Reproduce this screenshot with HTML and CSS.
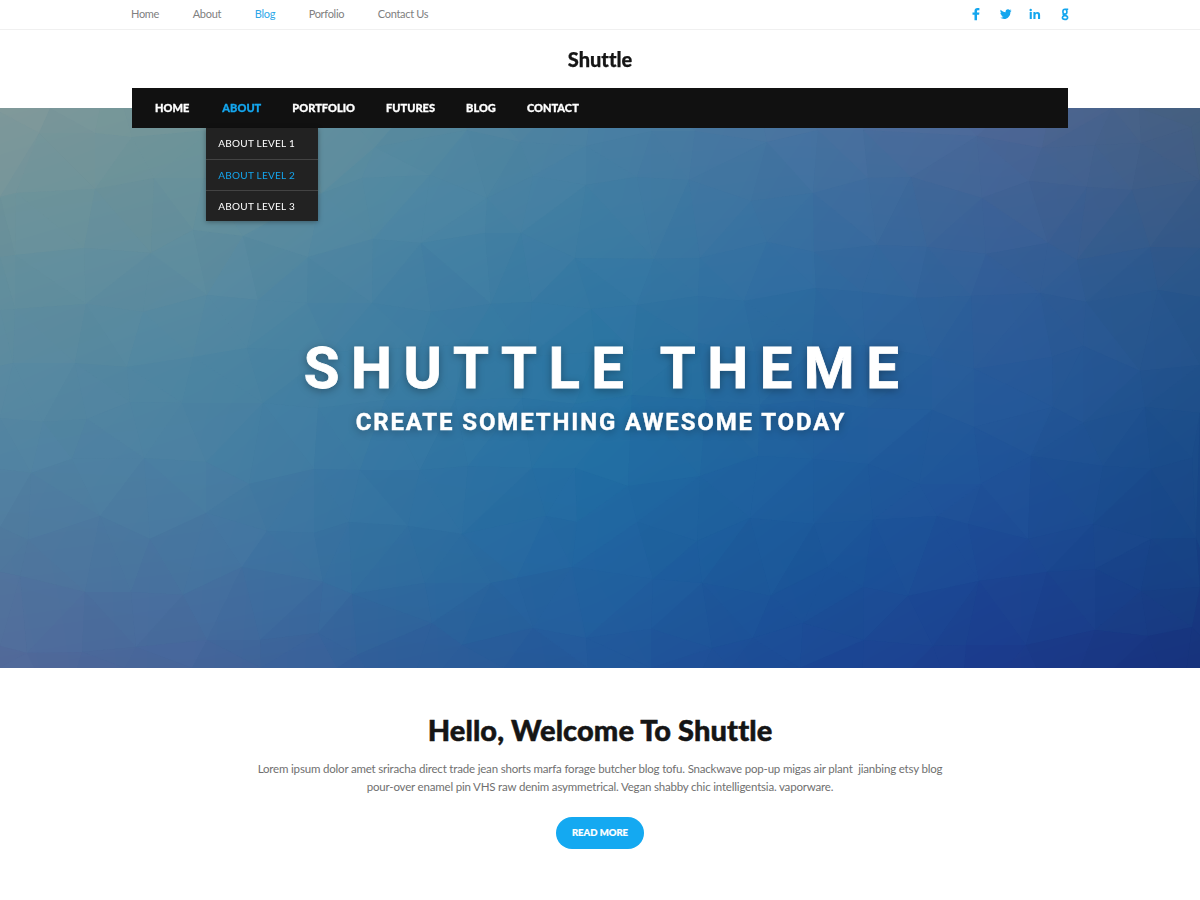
FILE: index.html
```html
<!DOCTYPE html>
<html lang="en">
<head>
<meta charset="utf-8">
<title>Shuttle</title>
<link rel="stylesheet" href="styles.css">
</head>
<body>
<div class="topbar">
  <div class="container topbar-inner">
    <nav class="top-links">
      <a href="#">Home</a><a href="#">About</a><a href="#" class="active">Blog</a><a href="#">Porfolio</a><a href="#">Contact Us</a>
    </nav>
    <div class="social">
      <svg class="icon" viewBox="0 0 14 14"><path d="M5.500 13.300V7.800H3.500V5.600h2V4C5.500 2 6.600 1 8.400 1h2v2.300H8.900c-.7 0-.9.3-.9.9v1.400h2.400l-.3 2.200H8v5.500z"/></svg>
      <svg class="icon" viewBox="0 0 14 14"><path d="M12.700 3.800l-1.300 1.100c.1 4.300-3 7-6.200 7-1.500 0-2.900-.4-4-1.100 1.300.1 2.500-.3 3.400-1-1.100 0-1.900-.7-2.200-1.600h1C2.200 7.900 1.400 7 1.400 5.700l1 .3C1.300 5.200 1.100 3.900 1.700 2.800c1.300 1.500 3 2.400 4.900 2.500-.3-1.700.9-3 2.400-3 .7 0 1.300.3 1.700.7l1.500-.5-.9 1.400z"/></svg>
      <svg class="icon" viewBox="0 0 14 14"><path d="M1.700 5.100h2.100V12H1.700zM2.700 1.800a1.200 1.200 0 110 2.400 1.200 1.200 0 010-2.400zM5.400 5.100h2v.9c.4-.7 1.100-1.100 2-1.100 1.900 0 2.700 1.200 2.700 3.100v4H10V8.400c0-1-.3-1.600-1.100-1.600-.9 0-1.400.6-1.400 1.700V12H5.400z"/></svg>
      <svg class="icon line" viewBox="0 0 14 14"><path d="M10.200 2.200H7.400M8.900 4.700a2 2.400 0 11-4 0 2 2.400 0 014 0zM5.600 6.900c-.7.6-.5 1.400.6 1.500 2.100.2 3.400.5 3.400 2 0 1.300-1.200 2-2.700 2s-2.500-.6-2.500-1.800c0-.9.600-1.500 1.800-1.900"/></svg>
    </div>
  </div>
</div>
<header class="container header">
  <div class="logo">Shuttle</div>
  <nav class="mainnav">
    <div class="item"><a href="#">HOME</a></div>
    <div class="item open"><a href="#" class="active">ABOUT</a>
      <div class="dropdown">
        <a href="#">ABOUT LEVEL 1</a><a href="#" class="active">ABOUT LEVEL 2</a><a href="#">ABOUT LEVEL 3</a>
      </div>
    </div>
    <div class="item"><a href="#">PORTFOLIO</a></div>
    <div class="item"><a href="#">FUTURES</a></div>
    <div class="item"><a href="#">BLOG</a></div>
    <div class="item"><a href="#">CONTACT</a></div>
  </nav>
</header>
<section class="hero">
  <canvas class="mesh" id="mesh" width="1200" height="560"></canvas>
  <div class="hero-text">
    <h1>SHUTTLE THEME</h1>
    <p>CREATE SOMETHING AWESOME TODAY</p>
  </div>
</section>
<section class="welcome">
  <h2>Hello, Welcome To Shuttle</h2>
  <p>Lorem ipsum dolor amet sriracha direct trade jean shorts marfa forage butcher blog tofu. Snackwave pop-up migas air plant &nbsp;jianbing etsy blog<br>pour-over enamel pin VHS raw denim asymmetrical. Vegan shabby chic intelligentsia. vaporware.</p>
  <a href="#" class="button">READ MORE</a>
</section>
<script src="mesh.js"></script>
</body>
</html>
```
FILE: styles.css
```css
* { box-sizing: border-box; }
body { margin: 0; background: #fff; color: #151515; font-family: Lato, "Open Sans", sans-serif; font-variant-ligatures: none; height: 900px; overflow: hidden; }
a { color: inherit; text-decoration: none; }
.container { width: 936px; margin: 0 auto; }
.topbar { height: 30px; border-bottom: 1px solid #f0f0f0; }
.topbar-inner { display: flex; justify-content: space-between; }
.top-links { display: flex; gap: 33.6px; margin-left: -1px; font-size: 11px; line-height: 28px; letter-spacing: -.3px; color: #808080; }
.top-links .active { color: #2ea7e8; }
.social { display: flex; gap: 15.6px; padding-top: 7px; margin-right: -3.700px; }
.icon { width: 14px; height: 14px; fill: #14a6ee; }
.icon.line { fill: none; stroke: #14a6ee; stroke-width: 1.6; }
.header { position: relative; z-index: 2; height: 78px; }
.logo { height: 58px; line-height: 59px; text-align: center; font-size: 20px; font-weight: 900; -webkit-text-stroke: .25px; }
.mainnav { display: flex; gap: 31px; height: 40px; padding-left: 23px; background: #111; color: #fff; font-size: 11px; font-weight: 900; line-height: 40px; letter-spacing: .03px; -webkit-text-stroke: .3px; }
.item { position: relative; }
.item.open { margin-left: 2px; }
.mainnav .active { color: #14a6ee; }
.dropdown { position: absolute; top: 40px; left: -16px; width: 112px; background: #222; box-shadow: 0 1px 5px rgba(0,0,0,.35); -webkit-text-stroke: 0; }
.dropdown a { display: block; height: 31px; line-height: 31px; padding-left: 12px; font-size: 10px; font-weight: 400; letter-spacing: .25px; white-space: nowrap; }
.dropdown a + a { border-top: 1px solid #434343; line-height: 30px; }
.dropdown a:first-child { height: 31px; }
.hero { display: grid; height: 560px; background: #2b72a2; }
.mesh, .hero-text { grid-area: 1 / 1; }
.mesh { display: block; }
.hero-text { z-index: 1; padding-top: 226px; text-align: center; color: #fff; font-family: Roboto, sans-serif; font-weight: 700; text-shadow: 0 2px 8px rgba(0,0,0,.35); }
.hero-text h1 { margin: 0; padding-left: 14px; font-size: 58px; line-height: 68px; font-weight: 700; letter-spacing: 11.500px; -webkit-text-stroke: .8px; }
.hero-text p { margin: 6px 0 0; padding-left: 2px; font-size: 24px; line-height: 28px; letter-spacing: 1.860px; -webkit-text-stroke: .4px; }
.welcome { text-align: center; padding-top: 44px; }
.welcome h2 { margin: 0; font-size: 29px; line-height: 36px; font-weight: 900; letter-spacing: .1px; -webkit-text-stroke: .5px; }
.welcome p { margin: 12px 0 22px; font-size: 11.500px; line-height: 17.500px; letter-spacing: -.185px; color: #707070; }
.button { display: inline-block; width: 88px; height: 32px; line-height: 32px; border-radius: 16px; background: #14a9f1; color: #fff; font-size: 9.500px; font-weight: 900; -webkit-text-stroke: .2px; }
```
FILE: mesh.js
```js
const xs = [0, 200, 400, 600, 800, 1000, 1200];
const ys = [108, 200, 290, 380, 460, 560, 668];
const grid = [
  '80989a 70959a 5b8b9e 4a7fa2 4c74a0 4e6797 466080',
  '6f939a 66909b 5088a2 427ea2 3c70a0 406295 3a5a85',
  '628e9d 598aa0 437fa2 3377a2 2f6ba0 315e98 28558a',
  '5989a0 4c84a1 3a7ca2 2874a2 25659c 285a9a 20508a',
  '5283a2 4a80a2 3475a2 216ea3 205f9e 205498 194b88',
  '50779d 4674a0 2f6e9f 2063a0 1b5799 1c4894 174384',
  '52699a 45649a 2f5d99 22579a 1c4995 1c3b8c 17327c'
].map(r => r.split(' ').map(h => [0, 2, 4].map(i => parseInt(h.substr(i, 2), 16))));

function locate(a, v) {
  v = Math.max(a[0], Math.min(a[a.length - 1], v));
  let i = 0;
  while (i < a.length - 2 && v > a[i + 1]) i++;
  return [i, (v - a[i]) / (a[i + 1] - a[i])];
}
function colorAt(x, y) {
  const [i, u] = locate(xs, x), [j, v] = locate(ys, y);
  return [0, 1, 2].map(k =>
    (grid[j][i][k] * (1 - u) + grid[j][i + 1][k] * u) * (1 - v) +
    (grid[j + 1][i][k] * (1 - u) + grid[j + 1][i + 1][k] * u) * v);
}

const flat = [
50,108,39,133,16,193,95,133,95,189,154,178,15,255,84,248,151,253,193,230,243,236,207,295,258,300,307,303,308,257,322,193,362,178,373,239,372,303,375,147,86,304,143,312,15,309,193,357,247,348,127,367,75,363,13,363,0,197,0,257,0,310,0,366,204,178,132,137,210,130,
467,130,520,142,430,175,487,198,533,176,586,185,586,146,521,233,421,243,485,233,575,258,654,259,637,177,689,180,695,131,652,131,767,142,751,201,700,258,767,242,698,296,744,301,637,305,591,309,532,302,491,304,431,312,467,345,595,352,633,351,698,343,527,357,420,347,
813,193,868,178,911,177,982,198,977,136,1042,148,1029,181,1095,145,1087,187,1141,143,1132,190,1191,127,1200,180,877,245,927,247,986,254,1048,243,1077,260,1150,247,1158,290,1200,297,1086,302,1040,293,971,296,916,298,862,292,816,288,814,252,1083,346,1140,371,974,369,932,357,865,345,1052,357,863,130,818,130,1200,248,1200,365,1112,108,1139,108,
43,422,87,419,130,402,182,403,31,473,72,459,144,458,206,462,263,403,318,408,314,469,360,470,249,484,206,513,150,539,100,516,28,540,20,576,85,592,131,592,183,595,242,567,267,531,314,533,349,522,323,582,352,594,27,653,82,652,136,647,207,640,260,640,318,633,357,655,0,418,0,469,0,527,0,572,0,646,192,668,125,668,261,668,337,668,
420,470,468,466,532,468,575,468,628,486,700,476,758,456,750,518,577,522,637,522,546,516,462,534,408,526,425,583,491,583,517,578,572,567,653,579,702,583,697,541,771,596,753,638,712,648,651,629,586,638,533,628,462,645,432,623,504,668,588,668,651,668,730,668,800,668,
632,395,706,400,455,400,522,398,760,405,330,352,385,400,755,352,812,350,815,400,575,404,
868,408,932,410,974,427,1053,407,1083,423,1145,407,1200,413,1031,456,1151,469,1103,466,1192,458,813,459,868,464,919,484,981,484,937,516,873,520,814,524,968,524,1028,539,1093,524,1151,539,1196,538,1047,572,1095,569,979,581,908,596,863,587,828,567,803,623,864,640,933,646,966,645,1026,645,1095,630,1148,636,1192,627,1141,591,1200,587,
-60,80,-60,700,1260,80,1260,700,110,60,300,60,450,60,600,60,750,60,900,60,1060,60,60,720,200,720,400,720,560,720,680,720,860,720,960,720,1060,720,1180,720];
const pts = [];
for (let i = 0; i < flat.length; i += 2) pts.push([flat[i], flat[i + 1]]);

// Bowyer-Watson triangulation
function triangulate(points) {
  const n = points.length;
  const p = points.concat([[-5000, -4000], [6500, -4100], [600, 9000]]);
  const make = (a, b, c) => {
    const [ax, ay] = p[a], [bx, by] = p[b], [cx, cy] = p[c];
    const d = 2 * (ax * (by - cy) + bx * (cy - ay) + cx * (ay - by));
    const A = ax * ax + ay * ay, B = bx * bx + by * by, C = cx * cx + cy * cy;
    const x = (A * (by - cy) + B * (cy - ay) + C * (ay - by)) / d;
    const y = (A * (cx - bx) + B * (ax - cx) + C * (bx - ax)) / d;
    return { v: [a, b, c], x, y, r: (ax - x) ** 2 + (ay - y) ** 2 };
  };
  let tris = [make(n, n + 1, n + 2)];
  for (let i = 0; i < n; i++) {
    const edges = new Map(), keep = [];
    for (const t of tris) {
      if ((p[i][0] - t.x) ** 2 + (p[i][1] - t.y) ** 2 < t.r) {
        for (let e = 0; e < 3; e++) {
          const a = t.v[e], b = t.v[(e + 1) % 3];
          const key = Math.min(a, b) + '_' + Math.max(a, b);
          if (edges.has(key)) edges.delete(key); else edges.set(key, [a, b]);
        }
      } else keep.push(t);
    }
    for (const [a, b] of edges.values()) {
      const cross = (p[b][0] - p[a][0]) * (p[i][1] - p[a][1]) - (p[b][1] - p[a][1]) * (p[i][0] - p[a][0]);
      if (Math.abs(cross) > 1e-6) keep.push(make(a, b, i));
    }
    tris = keep;
  }
  return tris.filter(t => t.v.every(v => v < n)).map(t => t.v.map(v => p[v]));
}

const ctx = document.getElementById('mesh').getContext('2d');
const image = ctx.createImageData(1200, 560);
for (let y = 0, o = 0; y < 560; y++)
  for (let x = 0; x < 1200; x++, o += 4) {
    const c = colorAt(x, y + 108);
    image.data[o] = c[0]; image.data[o + 1] = c[1]; image.data[o + 2] = c[2]; image.data[o + 3] = 255;
  }
ctx.putImageData(image, 0, 0);
for (const t of triangulate(pts)) {
  const cx = (t[0][0] + t[1][0] + t[2][0]) / 3, cy = (t[0][1] + t[1][1] + t[2][1]) / 3;
  const shade = Math.sin(cx * 12.9 + cy * 7.3) * 1;
  const c = colorAt(cx, cy).map(v => Math.round(v + shade));
  ctx.fillStyle = `rgba(${c[0]},${c[1]},${c[2]},.6)`;
  ctx.beginPath();
  t.forEach(([x, y]) => ctx.lineTo(x, y - 108));
  ctx.closePath();
  ctx.fill();
}
```
